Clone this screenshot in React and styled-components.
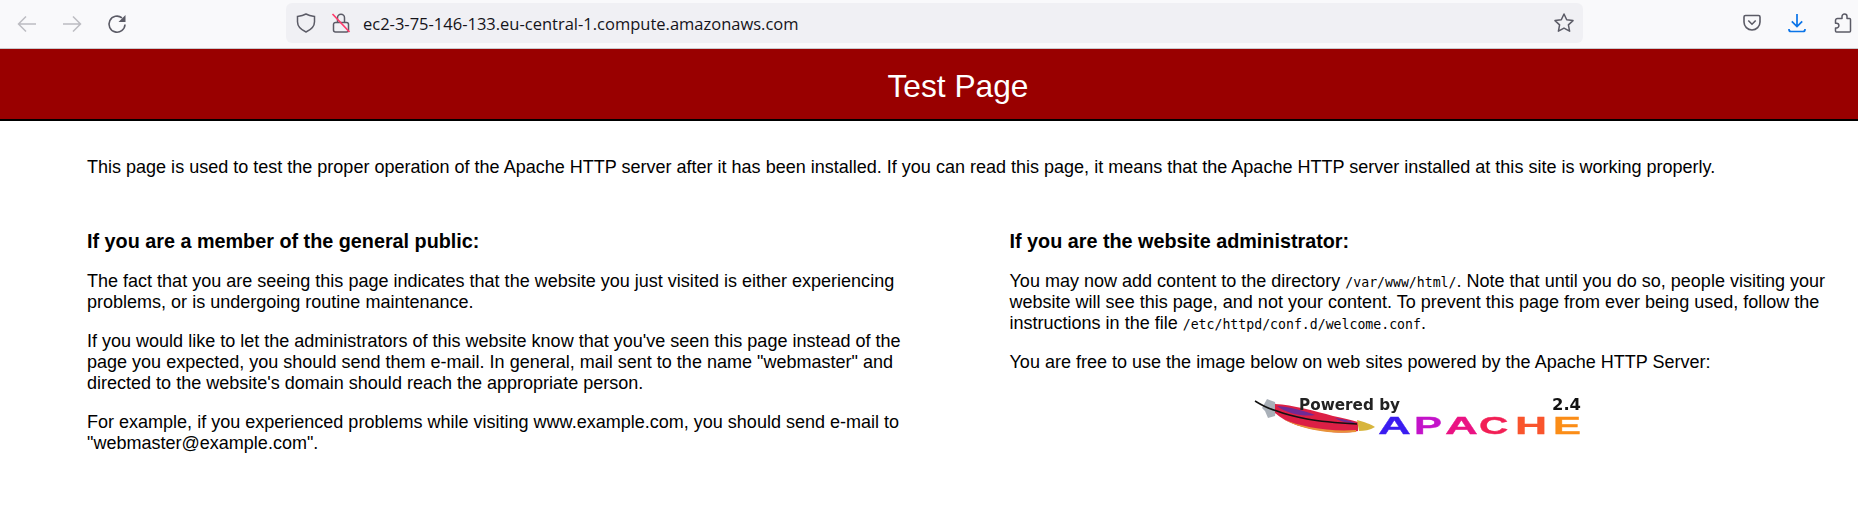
import React from "react";
import styled, { createGlobalStyle } from "styled-components";

const Global = createGlobalStyle`
  html, body { margin: 0; padding: 0; background: #fff; }
  body { font-family: "Liberation Sans", Arial, sans-serif; color: #000; }
`;
const Page = styled.div`width: 1858px; height: 527px; overflow: hidden; display: flex; flex-direction: column;`;
const Toolbar = styled.div`
  height: 48px; flex: none; background: #f9f9fb; border-bottom: 1px solid #c8c8cc;
  display: flex; align-items: center; padding: 0 0 0 15px;
`;
const NavButton = styled.button`
  width: 24px; height: 24px; padding: 0; margin-right: ${p => p.$gap}px; border: 0; background: none;
  display: flex; align-items: center; justify-content: center; flex: none;
`;
const UrlBar = styled.div`
  width: 1297px; height: 40px; margin-left: 157px; margin-top: -2px; flex: none; background: #f0f0f4; border-radius: 6px;
  display: flex; align-items: center; padding: 0 9px 0 10px; box-sizing: border-box;
`;
const UrlText = styled.span`
  font-family: "Open Sans", "Noto Sans", sans-serif; font-size: 16.5px; color: #15141a; margin-left: 12px; flex: 1;
`;
const UrlIcon = styled.span`display: flex; width: 20px; height: 20px; margin-right: ${p => p.$gap || 0}px;`;
const RightIcons = styled.div`display: flex; align-items: center; margin-left: 159px; margin-bottom: 2px; gap: 25px;`;
const Banner = styled.header`
  height: 66px; flex: none; background: #990000; border-bottom: 2px solid #000;
  display: flex; align-items: center; justify-content: center; padding: 4px 0 0 58px;
`;
const Title = styled.h1`margin: 0; font-size: 31.7px; font-weight: 400; color: #fff;`;
const Content = styled.main`padding: 36px 0 0 87px; font-size: 18.03px; line-height: normal;`;
const Intro = styled.p`margin: 0 0 52px;`;
const Columns = styled.div`display: grid; grid-template-columns: 816px 816px; column-gap: 106.5px;`;
const Heading = styled.h2`margin: 0 0 17.8px; font-size: 19.8px; font-weight: 700;`;
const Para = styled.p`margin: 0 0 18px;`;
const Code = styled.code`font-family: "DejaVu Sans Mono", monospace; font-size: 13.2px;`;
const LogoWrap = styled.div`display: flex; justify-content: center; margin-top: 21.5px;`;
const LogoSvg = styled.svg`filter: blur(0.35px);`;
const ArrowSvg = styled.svg`transform: ${p => (p.$flip ? "scaleX(-1)" : "none")};`;

const g = "#5b5b66";
const Back = ({ flip }) => (
  <ArrowSvg $flip={flip} width="24" height="24" viewBox="0 0 24 24" fill="none" stroke="#bcbcc2" strokeWidth="1.5">
    <path d="M21 12H4M11 4.5 3.5 12l7.5 7.5" />
  </ArrowSvg>
);
const Reload = () => (
  <svg width="24" height="24" viewBox="0 0 24 24" fill="none" stroke={g} strokeWidth="1.6">
    <path d="M20 12.500a8 8 0 1 1-3-6.600" />
    <path d="M20.500 3v7h-7z" fill={g} stroke="none" />
  </svg>
);
const Shield = () => (
  <svg width="20" height="20" viewBox="0 0 20 20" fill="none" stroke={g} strokeWidth="1.5">
    <path d="M10 1c2.500 1.400 5 2 8.500 2.400v5.400c0 4.600-3.500 8-8.500 10.200-5-2.200-8.500-5.600-8.500-10.200V3.400C5 3 7.500 2.400 10 1z" />
  </svg>
);
const Lock = () => (
  <svg width="20" height="20" viewBox="0 0 20 20" fill="none" stroke={g} strokeWidth="1.5">
    <path d="M6.500 9V4.800a3.500 3.500 0 0 1 7 0V9" />
    <path d="M4.500 9.500h11a2 2 0 0 1 2 2v5.500a2 2 0 0 1-2 2h-11a2 2 0 0 1-2-2v-5.500a2 2 0 0 1 2-2z" />
    <path d="M1.500 1 18.500 19" stroke="#ff3b6b" strokeWidth="1.700" />
  </svg>
);
const Star = () => (
  <svg width="20" height="20" viewBox="0 0 20 20" fill="none" stroke={g} strokeWidth="1.5" strokeLinejoin="round">
    <path d="M10 1l2.700 5.800 6.300.8-4.600 4.300 1.200 6.300-5.600-3.100-5.600 3.100 1.200-6.300L1 7.600l6.300-.8z" />
  </svg>
);
const Pocket = () => (
  <svg width="20" height="20" viewBox="0 0 20 20" fill="none" stroke={g} strokeWidth="1.600">
    <path d="M3.500 2.500h13a1.500 1.500 0 0 1 1.500 1.500v5a8 8 0 0 1-16 0V4a1.500 1.500 0 0 1 1.500-1.500z" />
    <path d="M6.300 7.500l3.700 3.700 3.700-3.700" />
  </svg>
);
const Download = () => (
  <svg width="20" height="20" viewBox="0 0 20 20" fill="none" stroke="#0a74e8" strokeWidth="1.700">
    <path d="M10 1v12.500M4.800 8.300 10 13.500l5.200-5.200" />
    <path d="M2 16v.5a2 2 0 0 0 2 2h12a2 2 0 0 0 2-2V16" />
  </svg>
);
const Puzzle = () => (
  <svg width="20" height="20" viewBox="0 0 20 20" fill="none" stroke={g} strokeWidth="1.5" strokeLinejoin="round">
    <path d="M7.500 5.500h2.500V3.500a2.500 2.500 0 0 1 5 0v2h2.500a1 1 0 0 1 1 1v11.500a1 1 0 0 1-1 1H4.500a1 1 0 0 1-1-1v-3h1a2.400 2.400 0 0 0 0-4.800h-1V7.500a2 2 0 0 1 2-2z" />
  </svg>
);

const LETTERS = [
  ["A", 125, 1.9, "#3a1cf0"],
  ["P", 161, 1.75, "#c313c9"],
  ["A", 192, 1.9, "#ea1283"],
  ["C", 226, 1.7, "#f21f55"],
  ["H", 262, 1.85, "#f9552d"],
  ["E", 300, 1.75, "#fb8d17"],
];

const ApacheLogo = () => (
  <LogoSvg width="330" height="46" viewBox="0 0 330 46">
    <path d="M14 5 L22 8 L23 14 L22 22 L15 24 L12 17 L9 14z" fill="#a9b0b8" />
    <path d="M22 10 C 40 11 62 17 80 22 C 90 24 98 26 105 28 L 105 37 C 95 39 84 39 72 37 C 54 35 34 30 22 19z" fill="#dc1f45" />
    <path d="M24 12 C 38 13 52 17 62 21 C 52 23 34 20 24 12z" fill="#6f2a96" />
    <path d="M82 24 C 90 25 98 27 102 29 C 94 29 86 27 82 24z" fill="#6f2a96" />
    <path d="M30 25 C 48 33 76 38 103 36 L 103 38 C 76 41 48 35 30 25z" fill="#e8933a" />
    <path d="M104 26 C 111 28 118 30 122 33 C 117 36 111 37 106 37z" fill="#d7b53d" />
    <path d="M2 7 C 10 12 16 15 24 17 C 34 21 44 23 54 25 C 70 28 86 29 104 30" fill="none" stroke="#111" strokeWidth="1.500" />
    <text x="46" y="16" fontFamily="'DejaVu Sans', sans-serif" fontSize="15.500" fontWeight="700" fill="#222" textLength="101" lengthAdjust="spacingAndGlyphs">Powered by</text>
    <text x="299" y="16" fontFamily="'DejaVu Sans', sans-serif" fontSize="16.500" fontWeight="700" fill="#111" textLength="29" lengthAdjust="spacingAndGlyphs">2.4</text>
    {LETTERS.map(([c, x, s, col]) => (
      <text key={x} transform={`translate(${x} 40) scale(${s} 1)`} fontFamily="'Liberation Sans', sans-serif" fontSize="24" fontWeight="700" fill={col} stroke={col} strokeWidth="0.3">{c}</text>
    ))}
  </LogoSvg>
);

export default function App() {
  return (
    <Page>
      <Global />
      <Toolbar>
        <NavButton $gap={21}><Back /></NavButton>
        <NavButton $gap={21}><Back flip /></NavButton>
        <NavButton $gap={0}><Reload /></NavButton>
        <UrlBar>
          <UrlIcon $gap={15}><Shield /></UrlIcon>
          <UrlIcon><Lock /></UrlIcon>
          <UrlText>ec2-3-75-146-133.eu-central-1.compute.amazonaws.com</UrlText>
          <UrlIcon><Star /></UrlIcon>
        </UrlBar>
        <RightIcons>
          <UrlIcon><Pocket /></UrlIcon>
          <UrlIcon><Download /></UrlIcon>
          <UrlIcon><Puzzle /></UrlIcon>
        </RightIcons>
      </Toolbar>
      <Banner><Title>Test Page</Title></Banner>
      <Content>
        <Intro>This page is used to test the proper operation of the Apache HTTP server after it has been installed. If you can read this page, it means that the Apache HTTP server installed at this site is working properly.</Intro>
        <Columns>
          <section>
            <Heading>If you are a member of the general public:</Heading>
            <Para>The fact that you are seeing this page indicates that the website you just visited is either experiencing problems, or is undergoing routine maintenance.</Para>
            <Para>If you would like to let the administrators of this website know that you've seen this page instead of the page you expected, you should send them e-mail. In general, mail sent to the name "webmaster" and directed to the website's domain should reach the appropriate person.</Para>
            <Para>For example, if you experienced problems while visiting www.example.com, you should send e-mail to "webmaster@example.com".</Para>
          </section>
          <section>
            <Heading>If you are the website administrator:</Heading>
            <Para>You may now add content to the directory <Code>/var/www/html/</Code>. Note that until you do so, people visiting your website will see this page, and not your content. To prevent this page from ever being used, follow the instructions in the file <Code>/etc/httpd/conf.d/welcome.conf</Code>.</Para>
            <Para>You are free to use the image below on web sites powered by the Apache HTTP Server:</Para>
            <LogoWrap><ApacheLogo /></LogoWrap>
          </section>
        </Columns>
      </Content>
    </Page>
  );
}
